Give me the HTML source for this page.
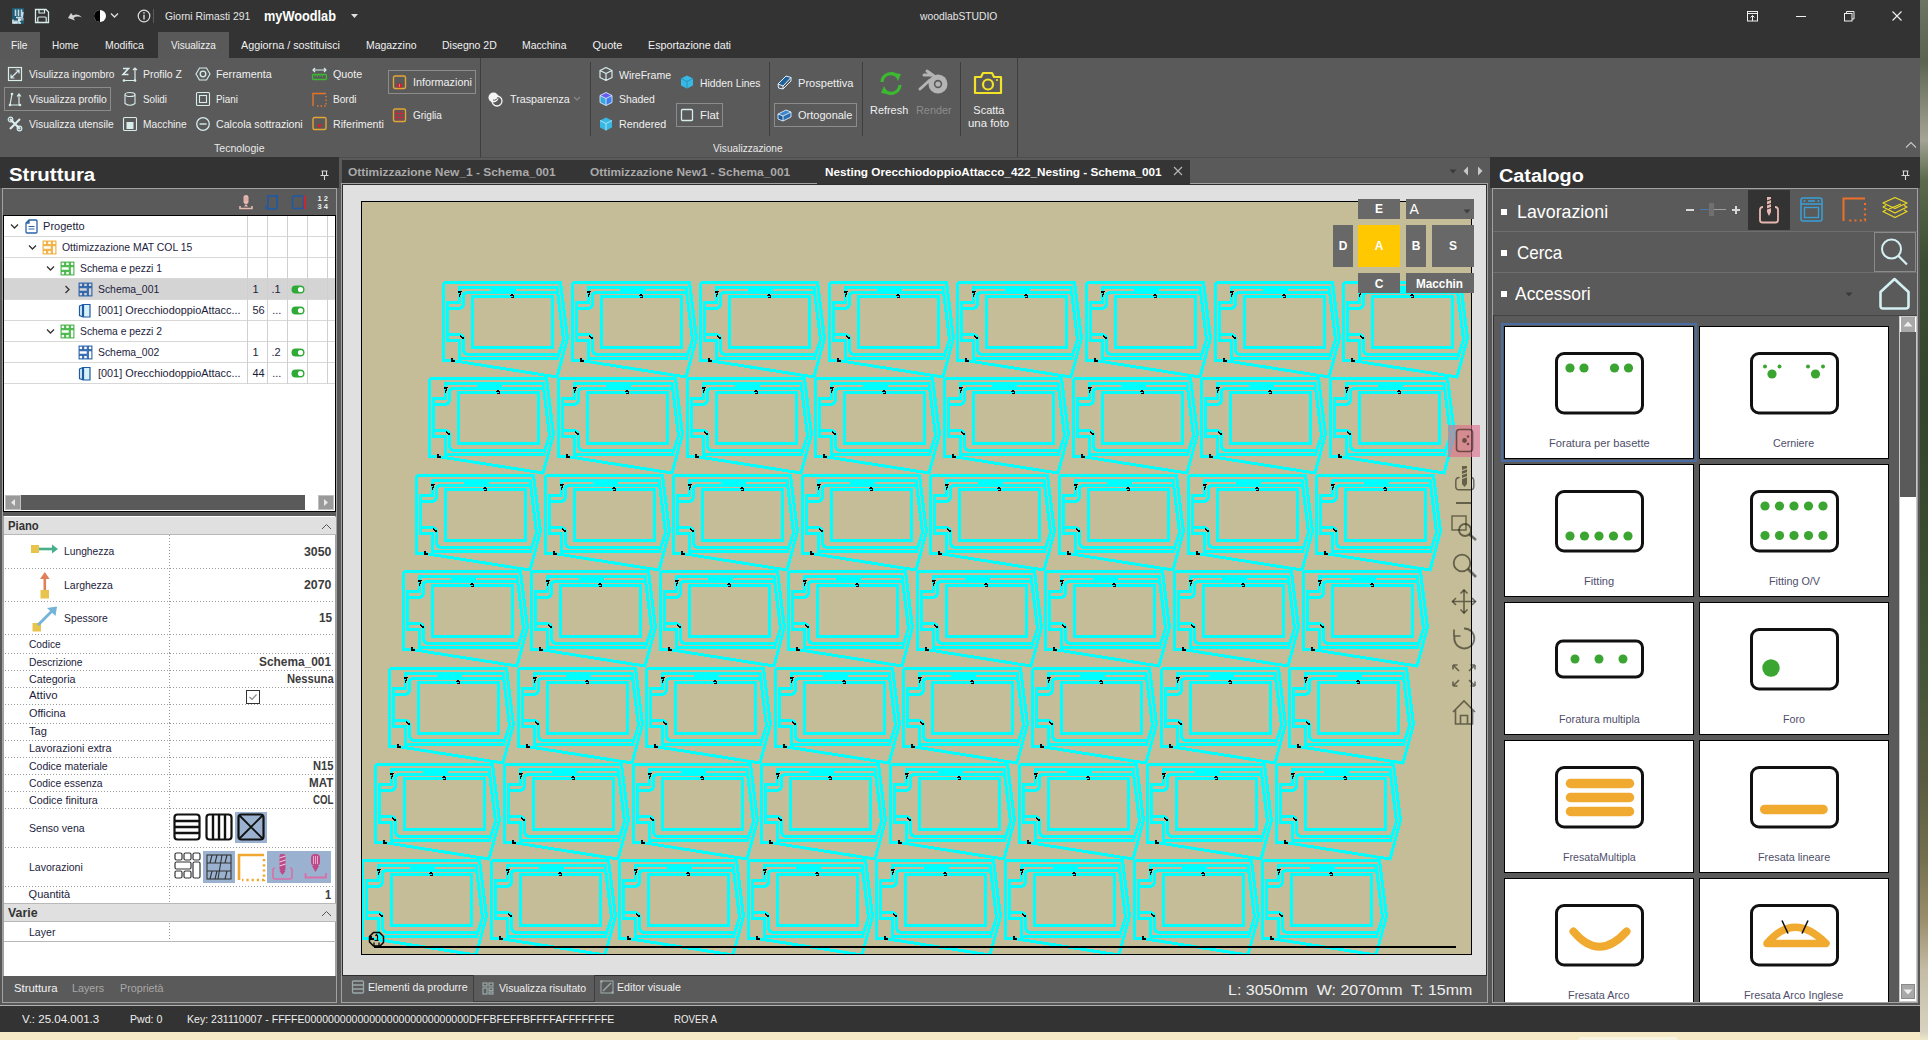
<!DOCTYPE html>
<html><head><meta charset="utf-8">
<style>
*{box-sizing:border-box}
html,body{margin:0;padding:0}
body{width:1928px;height:1040px;position:relative;overflow:hidden;background:#f6ebc6;font-family:"Liberation Sans",sans-serif;font-size:11px;color:#fff}
.a{position:absolute}
.t{position:absolute;white-space:nowrap;line-height:1;transform-origin:0 0}
svg.a{overflow:visible}
</style></head><body>
<div class="a" style="left:1920px;top:0;width:8px;height:1040px;background:linear-gradient(#6c7464 0px,#5a6450 60px,#8a8c7c 110px,#a4a494 140px,#5a6a4a 180px,#3e4e34 260px,#34442c 400px,#3c4c30 560px,#465638 680px,#5a5c40 780px,#74704e 860px,#9a8e6c 920px,#c4bca4 970px,#d8d2c0 1032px,#efe6c8 1040px)"></div>
<div id="app" class="a" style="left:0;top:0;width:1920px;height:1032px;background:#4e4e4e;overflow:hidden">
<div class="a" style="left:0;top:0;width:1920px;height:58px;background:#333333"></div>
<svg class="a" style="left:12px;top:8px" width="12" height="16" viewBox="0 0 12 16">
<rect x="0" y="0" width="12" height="16" rx="1" fill="#1d5c74"/>
<path d="M3.5,1.5 V8 M6.5,1.5 V8 M9.5,1.5 V8 M4,9.5 H10 L11,4" stroke="#c8d8e0" stroke-width="1.6" fill="none"/>
<path d="M5,10 H11.5 V12.5 H8 Z" fill="#9aaab4"/>
<path d="M1,11.5 V15 H3 V12.5 M3,15 H5 V12.5 M7,10.5 V15 H9 M6,12 H9" stroke="#e8f0f2" stroke-width="1.5" fill="none"/>
</svg>
<svg class="a" style="left:34px;top:8px" width="16" height="16" viewBox="0 0 16 16">
<path d="M1.5,1.5 H12 L14.5,4 V14.5 H1.5 Z" fill="none" stroke="#d8ecec" stroke-width="1.3"/>
<path d="M5,1.5 V5 H10.5 V1.5" fill="none" stroke="#d8ecec" stroke-width="1.2"/>
<path d="M3.8,14.5 V10 Q3.8,9 4.8,9 H11.2 Q12.2,9 12.2,10 V14.5" fill="none" stroke="#d8ecec" stroke-width="1.2"/>
</svg>
<svg class="a" style="left:67px;top:10px" width="16" height="12" viewBox="0 0 16 12">
<path d="M1,8 L4,3 L6,5.5 Q11,3 15,7.5 Q10,5.5 6.5,8 L8,10.5 Z" fill="#d4d4d4"/>
</svg>
<svg class="a" style="left:93px;top:9px" width="14" height="14" viewBox="0 0 14 14">
<circle cx="7" cy="7" r="6" fill="#fff"/><path d="M7,1 A6,6 0 0 0 7,13 Z" fill="#000"/></svg>
<svg class="a" style="left:110px;top:12px" width="9" height="7" viewBox="0 0 9 7"><path d="M1,1.5 L4.5,5 L8,1.5" stroke="#e0e0e0" stroke-width="1.3" fill="none"/></svg>
<svg class="a" style="left:137px;top:9px" width="14" height="14" viewBox="0 0 14 14"><circle cx="7" cy="7" r="5.8" stroke="#e0e0e0" stroke-width="1.2" fill="none"/><path d="M7,5.8 V10.5" stroke="#e0e0e0" stroke-width="1.4"/><circle cx="7" cy="3.9" r="0.8" fill="#e0e0e0"/></svg>
<div class="a" style="left:153px;top:9px;width:1px;height:14px;background:#5a5a5a"></div>
<span class="t" style="left:165.30px;top:11.29px;font-size:11px;font-weight:400;color:#e6e6e6;transform:scaleX(0.9428);">Giorni Rimasti 291</span>
<span class="t" style="left:264.00px;top:8.75px;font-size:14px;font-weight:700;color:#ffffff;transform:scaleX(0.9105);">myWoodlab</span>
<svg class="a" style="left:351px;top:14px" width="7" height="4" viewBox="0 0 7 4"><path d="M0,0 H7 L3.5,4 Z" fill="#e0e0e0"/></svg>
<span class="t" style="left:919.80px;top:10.69px;font-size:11px;font-weight:400;color:#e6e6e6;transform:scaleX(0.9378);">woodlabSTUDIO</span>
<svg class="a" style="left:1746px;top:10px" width="13" height="12" viewBox="0 0 13 12" fill="none" stroke="#f0f0f0" stroke-width="1">
<rect x="1.5" y="1.5" width="10" height="9.5"/><path d="M1.5,3.5 H11.5"/><path d="M6.5,11 V5.5 M4.5,7.5 L6.5,5.5 L8.5,7.5"/></svg>
<div class="a" style="left:1796px;top:16px;width:10px;height:1px;background:#f0f0f0"></div>
<svg class="a" style="left:1843px;top:10px" width="12" height="12" viewBox="0 0 12 12" fill="none" stroke="#f0f0f0" stroke-width="1">
<rect x="1.5" y="3.5" width="7.5" height="7.5"/><path d="M3.5,3.5 V1.5 H11 V9 H9"/></svg>
<svg class="a" style="left:1891px;top:10px" width="12" height="12" viewBox="0 0 12 12"><path d="M1.5,1.5 L10.5,10.5 M10.5,1.5 L1.5,10.5" stroke="#f0f0f0" stroke-width="1.1"/></svg>
<div class="a" style="left:0;top:32px;width:40px;height:26px;background:#595959"></div>
<div class="a" style="left:158px;top:32px;width:71px;height:26px;background:#595959"></div>
<span class="t" style="left:11.40px;top:40.19px;font-size:11px;font-weight:400;color:#f0f0f0;transform:scaleX(0.9309);">File</span>
<span class="t" style="left:52.20px;top:40.19px;font-size:11px;font-weight:400;color:#f0f0f0;transform:scaleX(0.9065);">Home</span>
<span class="t" style="left:105.40px;top:40.19px;font-size:11px;font-weight:400;color:#f0f0f0;transform:scaleX(0.9497);">Modifica</span>
<span class="t" style="left:170.50px;top:40.19px;font-size:11px;font-weight:400;color:#f0f0f0;transform:scaleX(0.9103);">Visualizza</span>
<span class="t" style="left:241.40px;top:40.19px;font-size:11px;font-weight:400;color:#f0f0f0;transform:scaleX(0.9814);">Aggiorna / sostituisci</span>
<span class="t" style="left:366.10px;top:40.19px;font-size:11px;font-weight:400;color:#f0f0f0;transform:scaleX(0.9493);">Magazzino</span>
<span class="t" style="left:442.20px;top:40.19px;font-size:11px;font-weight:400;color:#f0f0f0;transform:scaleX(0.9517);">Disegno 2D</span>
<span class="t" style="left:522.20px;top:40.19px;font-size:11px;font-weight:400;color:#f0f0f0;transform:scaleX(0.9431);">Macchina</span>
<span class="t" style="left:592.50px;top:40.19px;font-size:11px;font-weight:400;color:#f0f0f0;">Quote</span>
<span class="t" style="left:648.30px;top:40.19px;font-size:11px;font-weight:400;color:#f0f0f0;transform:scaleX(0.9765);">Esportazione dati</span>
<div class="a" style="left:0;top:58px;width:1920px;height:99px;background:#5a5a5a"></div>
<div class="a" style="left:480px;top:58px;width:1px;height:99px;background:#3e3e3e"></div>
<div class="a" style="left:1017px;top:58px;width:1px;height:99px;background:#3e3e3e"></div>
<div class="a" style="left:590px;top:62px;width:1px;height:74px;background:#3e3e3e"></div>
<div class="a" style="left:769px;top:62px;width:1px;height:74px;background:#3e3e3e"></div>
<div class="a" style="left:862px;top:62px;width:1px;height:74px;background:#3e3e3e"></div>
<div class="a" style="left:960px;top:62px;width:1px;height:74px;background:#3e3e3e"></div>
<svg class="a" style="left:7px;top:66px" width="16" height="16" viewBox="0 0 16 16"><rect x="1.5" y="1.5" width="13" height="13" fill="none" stroke="#d8ecec" stroke-width="1.2"/><path d="M4,12 L12,4 M8.5,4 H12 V7.5 M4,8.5 V12 H7.5" fill="none" stroke="#d8ecec" stroke-width="1.2"/></svg>
<span class="t" style="left:28.60px;top:68.89px;font-size:11px;font-weight:400;color:#f0f0f0;transform:scaleX(0.9281);">Visulizza ingombro</span>
<div class="a" style="left:4px;top:87px;width:107px;height:24px;border:1px solid #8c8c8c"></div>
<svg class="a" style="left:7px;top:91px" width="16" height="16" viewBox="0 0 16 16"><path d="M3,14 L5,3 M3,14 H13 M12,14 V3 M10,5.5 L12,3 L14,5.5" fill="none" stroke="#d8ecec" stroke-width="1.2"/><circle cx="3" cy="14" r="1.3" fill="#d8ecec"/><circle cx="13" cy="14" r="1.3" fill="#d8ecec"/><circle cx="5" cy="3" r="1.3" fill="#d8ecec"/></svg>
<span class="t" style="left:28.60px;top:94.09px;font-size:11px;font-weight:400;color:#f0f0f0;transform:scaleX(0.9449);">Visualizza profilo</span>
<svg class="a" style="left:7px;top:116px" width="16" height="16" viewBox="0 0 16 16"><path d="M3,3 L13,13 M13,3 L3,13" stroke="#d8ecec" stroke-width="2.2"/><circle cx="3.5" cy="3.5" r="2.3" fill="none" stroke="#d8ecec" stroke-width="1.2"/><circle cx="12.5" cy="12.5" r="2.3" fill="none" stroke="#d8ecec" stroke-width="1.2"/></svg>
<span class="t" style="left:28.60px;top:119.09px;font-size:11px;font-weight:400;color:#f0f0f0;transform:scaleX(0.9381);">Visualizza utensile</span>
<svg class="a" style="left:122px;top:66px" width="16" height="16" viewBox="0 0 16 16"><path d="M1,2.5 H6.5 L1,8.5 H6.5" fill="none" stroke="#d8ecec" stroke-width="1.6"/><path d="M2,14.5 H13 M13,14.5 V2 M11,4 L13,2 L15,4" fill="none" stroke="#d8ecec" stroke-width="1.2"/><circle cx="2" cy="14.5" r="1.3" fill="#d8ecec"/><circle cx="13" cy="14.5" r="1.3" fill="#d8ecec"/></svg>
<span class="t" style="left:143.40px;top:68.89px;font-size:11px;font-weight:400;color:#f0f0f0;transform:scaleX(0.9523);">Profilo Z</span>
<svg class="a" style="left:122px;top:91px" width="16" height="16" viewBox="0 0 16 16"><ellipse cx="8" cy="3.5" rx="5" ry="2" fill="none" stroke="#d8ecec" stroke-width="1.1"/><path d="M3,3.5 V12.5 Q8,16 13,12.5 V3.5" fill="none" stroke="#d8ecec" stroke-width="1.1"/></svg>
<span class="t" style="left:143.40px;top:94.09px;font-size:11px;font-weight:400;color:#f0f0f0;transform:scaleX(0.8921);">Solidi</span>
<svg class="a" style="left:122px;top:116px" width="16" height="16" viewBox="0 0 16 16"><rect x="1.5" y="1.5" width="13" height="13" rx="1" fill="none" stroke="#d8ecec" stroke-width="1.1"/><rect x="4.5" y="6" width="7" height="7" fill="#d8ecec"/></svg>
<span class="t" style="left:143.40px;top:119.09px;font-size:11px;font-weight:400;color:#f0f0f0;transform:scaleX(0.9283);">Macchine</span>
<svg class="a" style="left:195px;top:66px" width="16" height="16" viewBox="0 0 16 16"><path d="M4.5,2 H11.5 L15,8 L11.5,14 H4.5 L1,8 Z" fill="none" stroke="#d8ecec" stroke-width="1.1"/><circle cx="8" cy="8" r="2.8" fill="none" stroke="#d8ecec" stroke-width="1.3"/></svg>
<span class="t" style="left:216.40px;top:68.89px;font-size:11px;font-weight:400;color:#f0f0f0;transform:scaleX(0.9815);">Ferramenta</span>
<svg class="a" style="left:195px;top:91px" width="16" height="16" viewBox="0 0 16 16"><rect x="1.5" y="1.5" width="13" height="13" rx="1" fill="none" stroke="#d8ecec" stroke-width="1.1"/><rect x="4.5" y="4.5" width="7" height="7" fill="none" stroke="#d8ecec" stroke-width="1.1"/></svg>
<span class="t" style="left:216.40px;top:94.09px;font-size:11px;font-weight:400;color:#f0f0f0;transform:scaleX(0.8953);">Piani</span>
<svg class="a" style="left:195px;top:116px" width="16" height="16" viewBox="0 0 16 16"><circle cx="8" cy="8" r="6.3" fill="none" stroke="#d8ecec" stroke-width="1.3"/><path d="M4.5,8 H11.5" stroke="#d8ecec" stroke-width="1.4"/></svg>
<span class="t" style="left:216.40px;top:119.09px;font-size:11px;font-weight:400;color:#f0f0f0;transform:scaleX(0.9647);">Calcola sottrazioni</span>
<svg class="a" style="left:311px;top:66px" width="17" height="16" viewBox="0 0 17 16"><path d="M2,4 H15 M4,2 L2,4 L4,6 M13,2 L15,4 L13,6" fill="none" stroke="#d8ecec" stroke-width="1.2"/><rect x="1.5" y="8.5" width="14" height="5" rx="1" fill="none" stroke="#3cb832" stroke-width="1.3"/><path d="M4,9 V11 M6.5,9 V11 M9,9 V11 M11.5,9 V11" stroke="#3cb832" stroke-width="0.8"/></svg>
<span class="t" style="left:332.60px;top:68.89px;font-size:11px;font-weight:400;color:#f0f0f0;transform:scaleX(0.9745);">Quote</span>
<svg class="a" style="left:311px;top:92px" width="17" height="15" viewBox="0 0 17 15"><path d="M2,14 V1.5 H15" fill="none" stroke="#e8742a" stroke-width="1.4"/><path d="M15,4 V14 H4" fill="none" stroke="#e8742a" stroke-width="1.4" stroke-dasharray="1.5,2"/></svg>
<span class="t" style="left:332.60px;top:94.09px;font-size:11px;font-weight:400;color:#f0f0f0;transform:scaleX(0.9190);">Bordi</span>
<svg class="a" style="left:311px;top:116px" width="17" height="15" viewBox="0 0 17 15"><rect x="2" y="1.5" width="13" height="12" rx="1.5" fill="none" stroke="#e4a634" stroke-width="1.4"/><path d="M5.5,8.5 H11.5 L8.5,12 Z" fill="#d81e2a"/></svg>
<span class="t" style="left:332.60px;top:119.09px;font-size:11px;font-weight:400;color:#f0f0f0;transform:scaleX(0.9664);">Riferimenti</span>
<div class="a" style="left:388px;top:70px;width:88px;height:24px;border:1px solid #8c8c8c"></div>
<svg class="a" style="left:392px;top:75px" width="16" height="15" viewBox="0 0 16 15"><rect x="1.5" y="1" width="12" height="12.5" rx="1.5" fill="none" stroke="#e4a634" stroke-width="1.4"/><rect x="5" y="8.5" width="5" height="4" rx="1.2" fill="#d81e2a"/><path d="M7.5,9 V12" stroke="#f0a0a0" stroke-width="0.7"/></svg>
<span class="t" style="left:412.60px;top:76.99px;font-size:11px;font-weight:400;color:#f0f0f0;transform:scaleX(0.9814);">Informazioni</span>
<svg class="a" style="left:392px;top:108px" width="16" height="15" viewBox="0 0 16 15"><rect x="1.5" y="1" width="12" height="12.5" rx="1.5" fill="none" stroke="#e4a634" stroke-width="1.4"/><path d="M5.5,2.5 V12.5 M9.5,2.5 V12.5 M2.5,5.5 H12.5 M2.5,9.5 H12.5" stroke="#c62a3a" stroke-width="1.2"/></svg>
<span class="t" style="left:412.60px;top:110.29px;font-size:11px;font-weight:400;color:#f0f0f0;transform:scaleX(0.9092);">Griglia</span>
<span class="t" style="left:214.25px;top:143.49px;font-size:11px;font-weight:400;color:#e8e8e8;transform:scaleX(0.9602);">Tecnologie</span>
<svg class="a" style="left:487px;top:91px" width="17" height="16" viewBox="0 0 17 16"><circle cx="6.5" cy="6.5" r="5" fill="#f4f4f4"/><circle cx="10" cy="10" r="5" fill="none" stroke="#f4f4f4" stroke-width="1.3"/><path d="M6,9 A4,4 0 0 0 11,6" stroke="#5a5a5a" stroke-width="1" fill="none"/></svg>
<span class="t" style="left:509.90px;top:94.29px;font-size:11px;font-weight:400;color:#f0f0f0;transform:scaleX(0.9732);">Trasparenza</span>
<svg class="a" style="left:573px;top:96px" width="8" height="6" viewBox="0 0 8 6"><path d="M1,1 L4,4 L7,1" stroke="#8a8a8a" stroke-width="1.1" fill="none"/></svg>
<svg class="a" style="left:598px;top:66px" width="16" height="16" viewBox="0 0 16 16"><path d="M8,1.5 L14,4.5 V11.5 L8,14.5 L2,11.5 V4.5 Z M2,4.5 L8,7.5 L14,4.5 M8,7.5 V14.5" fill="none" stroke="#d8ecec" stroke-width="1.2" stroke-linejoin="round"/></svg>
<span class="t" style="left:619.40px;top:69.69px;font-size:11px;font-weight:400;color:#f0f0f0;transform:scaleX(0.9579);">WireFrame</span>
<svg class="a" style="left:598px;top:91px" width="16" height="16" viewBox="0 0 16 16"><path d="M8,1.5 L14,4.5 V11.5 L8,14.5 L2,11.5 V4.5 Z" fill="#3aa6e0"/><path d="M2,4.5 L8,1.5 L14,4.5 L8,7.5 Z" fill="#6a5cf2"/><path d="M8,7.5 L14,4.5 V11.5 L8,14.5 Z" fill="#3f7ef0"/><path d="M8,1.5 L14,4.5 V11.5 L8,14.5 L2,11.5 V4.5 Z M2,4.5 L8,7.5 L14,4.5 M8,7.5 V14.5" fill="none" stroke="#e8f4ff" stroke-width="0.8"/></svg>
<span class="t" style="left:619.40px;top:94.29px;font-size:11px;font-weight:400;color:#f0f0f0;transform:scaleX(0.9466);">Shaded</span>
<svg class="a" style="left:598px;top:116px" width="16" height="16" viewBox="0 0 16 16"><path d="M8,1.5 L14,4.5 V11.5 L8,14.5 L2,11.5 V4.5 Z" fill="#38b8e4"/><path d="M2,4.5 L8,7.5 L14,4.5 M8,7.5 V14.5" fill="none" stroke="#c8ecf8" stroke-width="0.8"/></svg>
<span class="t" style="left:619.40px;top:119.19px;font-size:11px;font-weight:400;color:#f0f0f0;transform:scaleX(0.9770);">Rendered</span>
<svg class="a" style="left:679px;top:74px" width="16" height="16" viewBox="0 0 16 16"><path d="M8,1.5 L14,4.5 V11.5 L8,14.5 L2,11.5 V4.5 Z" fill="#38b8e4"/><path d="M2,4.5 L8,7.5 L14,4.5 M8,7.5 V14.5" fill="none" stroke="#1e8ab8" stroke-width="0.8"/></svg>
<span class="t" style="left:700.10px;top:77.69px;font-size:11px;font-weight:400;color:#f0f0f0;transform:scaleX(0.9406);">Hidden Lines</span>
<div class="a" style="left:676px;top:103px;width:47px;height:24px;border:1px solid #8c8c8c"></div>
<svg class="a" style="left:680px;top:108px" width="14" height="14" viewBox="0 0 14 14"><rect x="1.5" y="1.5" width="11" height="11" rx="1" fill="none" stroke="#d8ecec" stroke-width="1.3"/></svg>
<span class="t" style="left:700.10px;top:110.19px;font-size:11px;font-weight:400;color:#f0f0f0;transform:scaleX(1.0307);">Flat</span>
<svg class="a" style="left:776px;top:74px" width="17" height="16" viewBox="0 0 17 16"><path d="M2,10 L10,2 L15,3.5 L7,12 Z" fill="#1f5f9a"/><path d="M2,10 L10,2 L15,3.5 L7,12 Z M2,10 L2.5,14 L7,15 L15,7 V3.5 M7,12 V15" fill="none" stroke="#dff0ff" stroke-width="1"/></svg>
<span class="t" style="left:798.00px;top:77.69px;font-size:11px;font-weight:400;color:#f0f0f0;transform:scaleX(1.0068);">Prospettiva</span>
<div class="a" style="left:774px;top:103px;width:83px;height:24px;border:1px solid #8c8c8c"></div>
<svg class="a" style="left:776px;top:107px" width="17" height="16" viewBox="0 0 17 16"><path d="M2,7 L10,3 L15,5 L7,9 Z" fill="#3f86c8"/><path d="M2,7 L7,9 V14 L2,12 Z" fill="#1c5a96"/><path d="M7,9 L15,5 V10 L7,14 Z" fill="#2a6cb0"/><path d="M2,7 L10,3 L15,5 V10 L7,14 L2,12 Z M2,7 L7,9 L15,5 M7,9 V14" fill="none" stroke="#dff0ff" stroke-width="0.9"/></svg>
<span class="t" style="left:798.00px;top:110.19px;font-size:11px;font-weight:400;color:#f0f0f0;">Ortogonale</span>
<svg class="a" style="left:876px;top:70px" width="30" height="27" viewBox="0 0 30 27"><path d="M6,12 A9,9 0 0 1 22,7" fill="none" stroke="#3cb832" stroke-width="3.2"/><path d="M18,3 L25,4 L22,11 Z" fill="#3cb832"/><path d="M24,15 A9,9 0 0 1 8,20" fill="none" stroke="#3cb832" stroke-width="3.2"/><path d="M12,24 L5,23 L8,16 Z" fill="#3cb832"/></svg>
<span class="t" style="left:869.90px;top:105.19px;font-size:11px;font-weight:400;color:#f0f0f0;transform:scaleX(0.9918);">Refresh</span>
<svg class="a" style="left:918px;top:69px" width="32" height="28" viewBox="0 0 32 28"><circle cx="20" cy="15" r="9.5" fill="#b4b4b4"/><circle cx="20" cy="15" r="4.2" fill="#5a5a5a"/><circle cx="20" cy="15" r="2.6" fill="#b4b4b4"/><path d="M2,20 L12,11 M6,6 H14 M9,2 L16,7" stroke="#b4b4b4" stroke-width="3" stroke-linecap="round"/></svg>
<span class="t" style="left:915.80px;top:105.19px;font-size:11px;font-weight:400;color:#8c8c8c;transform:scaleX(0.9868);">Render</span>
<svg class="a" style="left:972px;top:70px" width="32" height="26" viewBox="0 0 32 26"><path d="M3,7 H9 L11,3 H20 L22,7 H29 V23 H3 Z" fill="none" stroke="#f2e22a" stroke-width="2.2" stroke-linejoin="round"/><circle cx="16" cy="14.5" r="5" fill="none" stroke="#f2e22a" stroke-width="2.2"/><circle cx="25" cy="10" r="1.1" fill="#f2e22a"/></svg>
<span class="t" style="left:973.30px;top:105.19px;font-size:11px;font-weight:400;color:#f0f0f0;">Scatta</span>
<span class="t" style="left:968.30px;top:118.49px;font-size:11px;font-weight:400;color:#f0f0f0;transform:scaleX(1.0363);">una foto</span>
<span class="t" style="left:713.40px;top:143.49px;font-size:11px;font-weight:400;color:#e8e8e8;transform:scaleX(0.9204);">Visualizzazione</span>
<svg class="a" style="left:1905px;top:141px" width="12" height="8" viewBox="0 0 12 8"><path d="M1,6.5 L6,1.5 L11,6.5" stroke="#c8c8c8" stroke-width="1.1" fill="none"/></svg>
<div class="a" style="left:0;top:157px;width:339px;height:31px;background:#333"></div>
<span class="t" style="left:9.20px;top:166.36px;font-size:18px;font-weight:700;color:#ffffff;transform:scaleX(1.1342);">Struttura</span>
<svg class="a" style="left:319px;top:170px;" width="11" height="11" viewBox="0 0 11 11"><path d="M2.5,1 H8.5 M3.5,1 V5.5 M7.5,1 V5.5 M1.5,5.5 H9.5 M5.5,5.5 V10" stroke="#d8d8d8" stroke-width="1.1" fill="none"/></svg>
<div class="a" style="left:0;top:188px;width:339px;height:817px;background:#575757"></div>
<div class="a" style="left:2px;top:188px;width:335px;height:815px;background:#5a5a5a;border:1px solid #a2a2a2"></div>
<svg class="a" style="left:239px;top:194px;" width="14" height="16" viewBox="0 0 14 16"><rect x="4.5" y="1" width="5" height="9" rx="2.5" fill="#e7b9b2"/><path d="M7,10 L5,12.5 H9 Z" fill="#e7b9b2"/><path d="M1,12 V14.5 H13 V12" stroke="#e7b9b2" stroke-width="1.6" fill="none"/><path d="M6,3 V7 M8,3 V7" stroke="#c89890" stroke-width="0.6"/></svg>
<svg class="a" style="left:265px;top:194px;" width="14" height="16" viewBox="0 0 14 16"><path d="M3,2 H12 V13 Q12,15 10,15 H2 Q1,15 1,13 H3 Z M3,2 V13" fill="none" stroke="#1d5aa6" stroke-width="1.6"/><circle cx="12" cy="2.5" r="1.4" fill="#1d5aa6"/></svg>
<svg class="a" style="left:291px;top:194px;" width="16" height="16" viewBox="0 0 16 16"><rect x="1.5" y="2" width="11" height="12.5" rx="1.5" fill="none" stroke="#1d5aa6" stroke-width="1.6"/><rect x="12.8" y="1.5" width="1.8" height="13.5" fill="#e01e24"/></svg>
<svg class="a" style="left:317px;top:194px;" width="14" height="16" viewBox="0 0 14 16"><text x="0.5" y="7.2" font-size="7.5" font-weight="700" fill="#e8f2f2" font-family="Liberation Sans">1 2</text><text x="0.5" y="14.8" font-size="7.5" font-weight="700" fill="#e8f2f2" font-family="Liberation Sans">3 4</text></svg>
<div class="a" style="left:3px;top:215px;width:333px;height:297px;background:#fff;border:1px solid #000"></div>
<div class="a" style="left:4px;top:279px;width:331px;height:21px;background:#d4d4d4"></div>
<div class="a" style="left:4px;top:236px;width:331px;height:1px;background:#d8d8d8"></div>
<div class="a" style="left:4px;top:257px;width:331px;height:1px;background:#d8d8d8"></div>
<div class="a" style="left:4px;top:278px;width:331px;height:1px;background:#d8d8d8"></div>
<div class="a" style="left:4px;top:299px;width:331px;height:1px;background:#d8d8d8"></div>
<div class="a" style="left:4px;top:320px;width:331px;height:1px;background:#d8d8d8"></div>
<div class="a" style="left:4px;top:341px;width:331px;height:1px;background:#d8d8d8"></div>
<div class="a" style="left:4px;top:362px;width:331px;height:1px;background:#d8d8d8"></div>
<div class="a" style="left:4px;top:383px;width:331px;height:1px;background:#d8d8d8"></div>
<div class="a" style="left:247px;top:216px;width:1px;height:168px;background:#d0d0d0"></div>
<div class="a" style="left:267px;top:216px;width:1px;height:168px;background:#d0d0d0"></div>
<div class="a" style="left:287px;top:216px;width:1px;height:168px;background:#d0d0d0"></div>
<div class="a" style="left:307px;top:216px;width:1px;height:168px;background:#d0d0d0"></div>
<div class="a" style="left:327px;top:216px;width:1px;height:168px;background:#d0d0d0"></div>
<svg class="a" style="left:9.5px;top:223px;" width="9" height="7" viewBox="0 0 9 7"><path d="M1,1.5 L4.5,5 L8,1.5" stroke="#333" stroke-width="1.3" fill="none"/></svg>
<svg class="a" style="left:24.5px;top:219px;" width="14" height="15" viewBox="0 0 14 15"><path d="M4,1 H11 Q12,1 12,2 V13 Q12,14 11,14 H2 Q1,14 1,13 V4 Z M4,1 V4 H1" fill="#ffffff" stroke="#2a63a8" stroke-width="1.3"/><path d="M3.5,7.5 H9.5 M3.5,10 H9.5" stroke="#2a63a8" stroke-width="1.2"/></svg>
<span class="t" style="left:43.10px;top:221.19px;font-size:11px;font-weight:400;color:#1c1c3c;">Progetto</span>
<svg class="a" style="left:27.5px;top:244px;" width="9" height="7" viewBox="0 0 9 7"><path d="M1,1.5 L4.5,5 L8,1.5" stroke="#333" stroke-width="1.3" fill="none"/></svg>
<svg class="a" style="left:41.5px;top:240px;" width="14" height="15" viewBox="0 0 14 15"><g fill="none" stroke="#f0a830" stroke-width="1.05"><rect x="1.1" y="1.1" width="3.6" height="3.6"/><rect x="5.7" y="1.1" width="3.6" height="3.6"/><rect x="10.3" y="1.1" width="3.6" height="3.6"/><rect x="1.1" y="5.7" width="8.2" height="3.6"/><rect x="10.3" y="5.7" width="3.6" height="8.2"/><rect x="1.1" y="10.3" width="3.6" height="3.6"/><rect x="5.7" y="10.3" width="3.6" height="3.6"/></g></svg>
<span class="t" style="left:61.70px;top:242.19px;font-size:11px;font-weight:400;color:#1c1c3c;transform:scaleX(0.9440);">Ottimizzazione MAT COL 15</span>
<svg class="a" style="left:45.5px;top:265px;" width="9" height="7" viewBox="0 0 9 7"><path d="M1,1.5 L4.5,5 L8,1.5" stroke="#333" stroke-width="1.3" fill="none"/></svg>
<svg class="a" style="left:60px;top:261px;" width="14" height="15" viewBox="0 0 14 15"><g fill="none" stroke="#38b038" stroke-width="1.05"><rect x="1.1" y="1.1" width="3.6" height="3.6"/><rect x="5.7" y="1.1" width="3.6" height="3.6"/><rect x="10.3" y="1.1" width="3.6" height="3.6"/><rect x="1.1" y="5.7" width="8.2" height="3.6"/><rect x="10.3" y="5.7" width="3.6" height="8.2"/><rect x="1.1" y="10.3" width="3.6" height="3.6"/><rect x="5.7" y="10.3" width="3.6" height="3.6"/></g></svg>
<span class="t" style="left:79.60px;top:263.19px;font-size:11px;font-weight:400;color:#1c1c3c;transform:scaleX(0.9378);">Schema e pezzi 1</span>
<svg class="a" style="left:64px;top:285px;" width="7" height="9" viewBox="0 0 7 9"><path d="M1.5,1 L5,4.5 L1.5,8" stroke="#333" stroke-width="1.3" fill="none"/></svg>
<svg class="a" style="left:77.5px;top:282px;" width="14" height="15" viewBox="0 0 14 15"><g fill="none" stroke="#1d5aa6" stroke-width="1.05"><rect x="1.1" y="1.1" width="3.6" height="3.6"/><rect x="5.7" y="1.1" width="3.6" height="3.6"/><rect x="10.3" y="1.1" width="3.6" height="3.6"/><rect x="1.1" y="5.7" width="8.2" height="3.6"/><rect x="10.3" y="5.7" width="3.6" height="8.2"/><rect x="1.1" y="10.3" width="3.6" height="3.6"/><rect x="5.7" y="10.3" width="3.6" height="3.6"/></g></svg>
<span class="t" style="left:97.80px;top:284.19px;font-size:11px;font-weight:400;color:#1c1c3c;transform:scaleX(0.9441);">Schema_001</span>
<svg class="a" style="left:78px;top:303px;" width="14" height="15" viewBox="0 0 14 15"><path d="M1.5,3 L5,1.5 H12 V14 H5 L1.5,12.5 Z" fill="#d8f0f8" stroke="#1d5aa6" stroke-width="1.2"/><path d="M5,1.5 V14" stroke="#1d5aa6" stroke-width="2.2"/></svg>
<span class="t" style="left:97.80px;top:305.19px;font-size:11px;font-weight:400;color:#1c1c3c;transform:scaleX(0.9875);">[001] OrecchiodoppioAttacc...</span>
<svg class="a" style="left:45.5px;top:328px;" width="9" height="7" viewBox="0 0 9 7"><path d="M1,1.5 L4.5,5 L8,1.5" stroke="#333" stroke-width="1.3" fill="none"/></svg>
<svg class="a" style="left:60px;top:324px;" width="14" height="15" viewBox="0 0 14 15"><g fill="none" stroke="#38b038" stroke-width="1.05"><rect x="1.1" y="1.1" width="3.6" height="3.6"/><rect x="5.7" y="1.1" width="3.6" height="3.6"/><rect x="10.3" y="1.1" width="3.6" height="3.6"/><rect x="1.1" y="5.7" width="8.2" height="3.6"/><rect x="10.3" y="5.7" width="3.6" height="8.2"/><rect x="1.1" y="10.3" width="3.6" height="3.6"/><rect x="5.7" y="10.3" width="3.6" height="3.6"/></g></svg>
<span class="t" style="left:79.60px;top:326.19px;font-size:11px;font-weight:400;color:#1c1c3c;transform:scaleX(0.9378);">Schema e pezzi 2</span>
<svg class="a" style="left:77.5px;top:345px;" width="14" height="15" viewBox="0 0 14 15"><g fill="none" stroke="#1d5aa6" stroke-width="1.05"><rect x="1.1" y="1.1" width="3.6" height="3.6"/><rect x="5.7" y="1.1" width="3.6" height="3.6"/><rect x="10.3" y="1.1" width="3.6" height="3.6"/><rect x="1.1" y="5.7" width="8.2" height="3.6"/><rect x="10.3" y="5.7" width="3.6" height="8.2"/><rect x="1.1" y="10.3" width="3.6" height="3.6"/><rect x="5.7" y="10.3" width="3.6" height="3.6"/></g></svg>
<span class="t" style="left:97.80px;top:347.19px;font-size:11px;font-weight:400;color:#1c1c3c;transform:scaleX(0.9441);">Schema_002</span>
<svg class="a" style="left:78px;top:366px;" width="14" height="15" viewBox="0 0 14 15"><path d="M1.5,3 L5,1.5 H12 V14 H5 L1.5,12.5 Z" fill="#d8f0f8" stroke="#1d5aa6" stroke-width="1.2"/><path d="M5,1.5 V14" stroke="#1d5aa6" stroke-width="2.2"/></svg>
<span class="t" style="left:97.80px;top:368.19px;font-size:11px;font-weight:400;color:#1c1c3c;transform:scaleX(0.9875);">[001] OrecchiodoppioAttacc...</span>
<span class="t" style="left:252.50px;top:284.19px;font-size:11px;font-weight:400;color:#1c1c3c;">1</span>
<span class="t" style="left:271.50px;top:284.19px;font-size:11px;font-weight:400;color:#1c1c3c;">.1</span>
<svg class="a" style="left:291px;top:285px;" width="14" height="9" viewBox="0 0 14 9"><rect x="0.5" y="0.5" width="13" height="8" rx="4" fill="#2eaa36"/><circle cx="9.5" cy="4.5" r="2.6" fill="#fff"/></svg>
<span class="t" style="left:252.50px;top:305.19px;font-size:11px;font-weight:400;color:#1c1c3c;">56</span>
<span class="t" style="left:272.20px;top:305.19px;font-size:11px;font-weight:400;color:#1c1c3c;">...</span>
<svg class="a" style="left:291px;top:306px;" width="14" height="9" viewBox="0 0 14 9"><rect x="0.5" y="0.5" width="13" height="8" rx="4" fill="#2eaa36"/><circle cx="9.5" cy="4.5" r="2.6" fill="#fff"/></svg>
<span class="t" style="left:252.50px;top:347.19px;font-size:11px;font-weight:400;color:#1c1c3c;">1</span>
<span class="t" style="left:271.50px;top:347.19px;font-size:11px;font-weight:400;color:#1c1c3c;">.2</span>
<svg class="a" style="left:291px;top:348px;" width="14" height="9" viewBox="0 0 14 9"><rect x="0.5" y="0.5" width="13" height="8" rx="4" fill="#2eaa36"/><circle cx="9.5" cy="4.5" r="2.6" fill="#fff"/></svg>
<span class="t" style="left:252.50px;top:368.19px;font-size:11px;font-weight:400;color:#1c1c3c;">44</span>
<span class="t" style="left:272.20px;top:368.19px;font-size:11px;font-weight:400;color:#1c1c3c;">...</span>
<svg class="a" style="left:291px;top:369px;" width="14" height="9" viewBox="0 0 14 9"><rect x="0.5" y="0.5" width="13" height="8" rx="4" fill="#2eaa36"/><circle cx="9.5" cy="4.5" r="2.6" fill="#fff"/></svg>
<div class="a" style="left:4px;top:495px;width:331px;height:16px;background:#fff"></div>
<div class="a" style="left:5px;top:495px;width:16px;height:15px;background:#9a9a9a;border:1px solid #c0c0c0"></div>
<svg class="a" style="left:9px;top:498px;" width="8" height="9" viewBox="0 0 8 9"><path d="M6,1 L2,4.5 L6,8 Z" fill="#e8e8e8"/></svg>
<div class="a" style="left:21px;top:495px;width:284px;height:15px;background:#5a5a5a"></div>
<div class="a" style="left:318px;top:495px;width:16px;height:15px;background:#9a9a9a;border:1px solid #c0c0c0"></div>
<svg class="a" style="left:322px;top:498px;" width="8" height="9" viewBox="0 0 8 9"><path d="M2,1 L6,4.5 L2,8 Z" fill="#e8e8e8"/></svg>
<div class="a" style="left:3px;top:516px;width:333px;height:460px;background:#fff;border-left:1px solid #a0a0a0;border-right:1px solid #a0a0a0"></div>
<div class="a" style="left:4px;top:517px;width:332px;height:18px;background:#e0e0e0;border-bottom:1px solid #b8b8b8"></div>
<span class="t" style="left:8.00px;top:520.24px;font-size:12px;font-weight:700;color:#333;transform:scaleX(0.9396);">Piano</span>
<svg class="a" style="left:321px;top:523px;" width="11" height="7" viewBox="0 0 11 7"><path d="M1,6 L5.5,1.5 L10,6" stroke="#555" stroke-width="1" fill="none"/></svg>
<div class="a" style="left:5px;top:568px;width:331px;height:1px;background-image:linear-gradient(90deg,#9a9a9a 50%,transparent 50%);background-size:3px 1px"></div>
<div class="a" style="left:169px;top:535px;width:1px;height:33px;background-image:linear-gradient(#9a9a9a 50%,transparent 50%);background-size:1px 3px"></div>
<span class="t" style="left:63.50px;top:546.49px;font-size:11px;font-weight:400;color:#1c1c3c;transform:scaleX(0.9345);">Lunghezza</span>
<span class="t" style="left:304.20px;top:545.64px;font-size:12px;font-weight:700;color:#3c3c3c;transform:scaleX(1.0264);">3050</span>
<div class="a" style="left:5px;top:601px;width:331px;height:1px;background-image:linear-gradient(90deg,#9a9a9a 50%,transparent 50%);background-size:3px 1px"></div>
<div class="a" style="left:169px;top:568px;width:1px;height:33px;background-image:linear-gradient(#9a9a9a 50%,transparent 50%);background-size:1px 3px"></div>
<span class="t" style="left:63.50px;top:579.89px;font-size:11px;font-weight:400;color:#1c1c3c;transform:scaleX(0.9519);">Larghezza</span>
<span class="t" style="left:304.20px;top:579.04px;font-size:12px;font-weight:700;color:#3c3c3c;transform:scaleX(1.0264);">2070</span>
<div class="a" style="left:5px;top:634px;width:331px;height:1px;background-image:linear-gradient(90deg,#9a9a9a 50%,transparent 50%);background-size:3px 1px"></div>
<div class="a" style="left:169px;top:601px;width:1px;height:33px;background-image:linear-gradient(#9a9a9a 50%,transparent 50%);background-size:1px 3px"></div>
<span class="t" style="left:63.50px;top:612.69px;font-size:11px;font-weight:400;color:#1c1c3c;transform:scaleX(0.9425);">Spessore</span>
<span class="t" style="left:318.50px;top:611.84px;font-size:12px;font-weight:700;color:#3c3c3c;transform:scaleX(0.9814);">15</span>
<div class="a" style="left:5px;top:653px;width:331px;height:1px;background-image:linear-gradient(90deg,#9a9a9a 50%,transparent 50%);background-size:3px 1px"></div>
<div class="a" style="left:169px;top:634px;width:1px;height:19px;background-image:linear-gradient(#9a9a9a 50%,transparent 50%);background-size:1px 3px"></div>
<span class="t" style="left:28.60px;top:638.69px;font-size:11px;font-weight:400;color:#1c1c3c;transform:scaleX(0.9258);">Codice</span>
<div class="a" style="left:5px;top:670px;width:331px;height:1px;background-image:linear-gradient(90deg,#9a9a9a 50%,transparent 50%);background-size:3px 1px"></div>
<div class="a" style="left:169px;top:653px;width:1px;height:17px;background-image:linear-gradient(#9a9a9a 50%,transparent 50%);background-size:1px 3px"></div>
<span class="t" style="left:28.60px;top:656.69px;font-size:11px;font-weight:400;color:#1c1c3c;transform:scaleX(0.9310);">Descrizione</span>
<span class="t" style="left:259.30px;top:655.84px;font-size:12px;font-weight:700;color:#3c3c3c;transform:scaleX(0.9901);">Schema_001</span>
<div class="a" style="left:5px;top:687px;width:331px;height:1px;background-image:linear-gradient(90deg,#9a9a9a 50%,transparent 50%);background-size:3px 1px"></div>
<div class="a" style="left:169px;top:670px;width:1px;height:17px;background-image:linear-gradient(#9a9a9a 50%,transparent 50%);background-size:1px 3px"></div>
<span class="t" style="left:28.60px;top:673.59px;font-size:11px;font-weight:400;color:#1c1c3c;transform:scaleX(0.9749);">Categoria</span>
<span class="t" style="left:286.80px;top:672.74px;font-size:12px;font-weight:700;color:#3c3c3c;transform:scaleX(0.9316);">Nessuna</span>
<div class="a" style="left:5px;top:704px;width:331px;height:1px;background-image:linear-gradient(90deg,#9a9a9a 50%,transparent 50%);background-size:3px 1px"></div>
<div class="a" style="left:169px;top:687px;width:1px;height:17px;background-image:linear-gradient(#9a9a9a 50%,transparent 50%);background-size:1px 3px"></div>
<span class="t" style="left:28.60px;top:690.49px;font-size:11px;font-weight:400;color:#1c1c3c;transform:scaleX(1.0360);">Attivo</span>
<div class="a" style="left:5px;top:723px;width:331px;height:1px;background-image:linear-gradient(90deg,#9a9a9a 50%,transparent 50%);background-size:3px 1px"></div>
<div class="a" style="left:169px;top:704px;width:1px;height:19px;background-image:linear-gradient(#9a9a9a 50%,transparent 50%);background-size:1px 3px"></div>
<span class="t" style="left:28.60px;top:708.49px;font-size:11px;font-weight:400;color:#1c1c3c;transform:scaleX(0.9867);">Officina</span>
<div class="a" style="left:5px;top:740px;width:331px;height:1px;background-image:linear-gradient(90deg,#9a9a9a 50%,transparent 50%);background-size:3px 1px"></div>
<div class="a" style="left:169px;top:723px;width:1px;height:17px;background-image:linear-gradient(#9a9a9a 50%,transparent 50%);background-size:1px 3px"></div>
<span class="t" style="left:28.60px;top:726.49px;font-size:11px;font-weight:400;color:#1c1c3c;transform:scaleX(1.0093);">Tag</span>
<div class="a" style="left:5px;top:757px;width:331px;height:1px;background-image:linear-gradient(90deg,#9a9a9a 50%,transparent 50%);background-size:3px 1px"></div>
<div class="a" style="left:169px;top:740px;width:1px;height:17px;background-image:linear-gradient(#9a9a9a 50%,transparent 50%);background-size:1px 3px"></div>
<span class="t" style="left:28.60px;top:743.39px;font-size:11px;font-weight:400;color:#1c1c3c;transform:scaleX(0.9849);">Lavorazioni extra</span>
<div class="a" style="left:5px;top:774px;width:331px;height:1px;background-image:linear-gradient(90deg,#9a9a9a 50%,transparent 50%);background-size:3px 1px"></div>
<div class="a" style="left:169px;top:757px;width:1px;height:17px;background-image:linear-gradient(#9a9a9a 50%,transparent 50%);background-size:1px 3px"></div>
<span class="t" style="left:28.60px;top:760.69px;font-size:11px;font-weight:400;color:#1c1c3c;transform:scaleX(0.9535);">Codice materiale</span>
<span class="t" style="left:312.90px;top:759.84px;font-size:12px;font-weight:700;color:#3c3c3c;transform:scaleX(0.9312);">N15</span>
<div class="a" style="left:5px;top:791px;width:331px;height:1px;background-image:linear-gradient(90deg,#9a9a9a 50%,transparent 50%);background-size:3px 1px"></div>
<div class="a" style="left:169px;top:774px;width:1px;height:17px;background-image:linear-gradient(#9a9a9a 50%,transparent 50%);background-size:1px 3px"></div>
<span class="t" style="left:28.60px;top:777.69px;font-size:11px;font-weight:400;color:#1c1c3c;transform:scaleX(0.9404);">Codice essenza</span>
<span class="t" style="left:309.10px;top:776.84px;font-size:12px;font-weight:700;color:#3c3c3c;transform:scaleX(0.9681);">MAT</span>
<div class="a" style="left:5px;top:808px;width:331px;height:1px;background-image:linear-gradient(90deg,#9a9a9a 50%,transparent 50%);background-size:3px 1px"></div>
<div class="a" style="left:169px;top:791px;width:1px;height:17px;background-image:linear-gradient(#9a9a9a 50%,transparent 50%);background-size:1px 3px"></div>
<span class="t" style="left:28.60px;top:794.59px;font-size:11px;font-weight:400;color:#1c1c3c;transform:scaleX(0.9771);">Codice finitura</span>
<span class="t" style="left:312.90px;top:793.74px;font-size:12px;font-weight:700;color:#3c3c3c;transform:scaleX(0.8093);">COL</span>
<div class="a" style="left:5px;top:847px;width:331px;height:1px;background-image:linear-gradient(90deg,#9a9a9a 50%,transparent 50%);background-size:3px 1px"></div>
<div class="a" style="left:169px;top:808px;width:1px;height:39px;background-image:linear-gradient(#9a9a9a 50%,transparent 50%);background-size:1px 3px"></div>
<span class="t" style="left:28.60px;top:822.69px;font-size:11px;font-weight:400;color:#1c1c3c;transform:scaleX(0.9570);">Senso vena</span>
<div class="a" style="left:5px;top:886px;width:331px;height:1px;background-image:linear-gradient(90deg,#9a9a9a 50%,transparent 50%);background-size:3px 1px"></div>
<div class="a" style="left:169px;top:847px;width:1px;height:39px;background-image:linear-gradient(#9a9a9a 50%,transparent 50%);background-size:1px 3px"></div>
<span class="t" style="left:28.60px;top:862.09px;font-size:11px;font-weight:400;color:#1c1c3c;transform:scaleX(0.9563);">Lavorazioni</span>
<div class="a" style="left:169px;top:886px;width:1px;height:17px;background-image:linear-gradient(#9a9a9a 50%,transparent 50%);background-size:1px 3px"></div>
<span class="t" style="left:28.60px;top:889.39px;font-size:11px;font-weight:400;color:#1c1c3c;">Quantità</span>
<span class="t" style="left:325.40px;top:888.54px;font-size:12px;font-weight:700;color:#3c3c3c;transform:scaleX(0.9290);">1</span>
<div class="a" style="left:4px;top:903px;width:332px;height:1px;background:#b8b8b8"></div>
<svg class="a" style="left:30px;top:543px;" width="30" height="12" viewBox="0 0 30 12"><rect x="1" y="2" width="8" height="8" fill="#e9c44c"/><path d="M9,6 H24" stroke="#46b08a" stroke-width="2.6"/><path d="M22,1.5 L28,6 L22,10.5 Z" fill="#46b08a"/></svg>
<svg class="a" style="left:38px;top:571px;" width="14" height="28" viewBox="0 0 14 28"><rect x="2.5" y="19" width="8.5" height="8.5" fill="#e9c44c"/><path d="M6.8,19 V6" stroke="#e0805a" stroke-width="2.6"/><path d="M2,8 L6.8,1 L11.6,8 Z" fill="#e0805a"/></svg>
<svg class="a" style="left:31px;top:605px;" width="30" height="28" viewBox="0 0 30 28"><rect x="1.5" y="18" width="8.5" height="8.5" fill="#e9c44c"/><path d="M7,20 L22,5" stroke="#74b4d8" stroke-width="2.8"/><path d="M16,3 L26,1.5 L24.5,11 Z" fill="#74b4d8"/></svg>
<svg class="a" style="left:246px;top:690px;" width="14" height="14" viewBox="0 0 14 14"><rect x="0.5" y="0.5" width="13" height="13" fill="#fff" stroke="#333" stroke-width="1"/><path d="M3.5,7 L6,9.5 L10.5,4.5" stroke="#888" stroke-width="1.2" fill="none"/></svg>
<svg class="a" style="left:173px;top:813px;" width="28" height="28" viewBox="0 0 28 28"><rect x="1.5" y="1.5" width="25" height="25" rx="3" fill="#fff" stroke="#111" stroke-width="2.2"/><path d="M2,8 H26 M2,14 H26 M2,20 H26" stroke="#111" stroke-width="2.4"/></svg>
<svg class="a" style="left:205px;top:813px;" width="28" height="28" viewBox="0 0 28 28"><rect x="1.5" y="1.5" width="25" height="25" rx="3" fill="#fff" stroke="#111" stroke-width="2.2"/><path d="M8,2 V26 M14,2 V26 M20,2 V26" stroke="#111" stroke-width="2.4"/></svg>
<div class="a" style="left:235px;top:812px;width:32px;height:31px;background:#9ab2d0"></div>
<svg class="a" style="left:237px;top:813px;" width="28" height="28" viewBox="0 0 28 28"><rect x="1.5" y="1.5" width="25" height="25" rx="3" fill="none" stroke="#111" stroke-width="2.2"/><path d="M2,2 L26,26 M26,2 L2,26" stroke="#111" stroke-width="1.8"/></svg>
<svg class="a" style="left:174px;top:852px;" width="28" height="30" viewBox="0 0 28 30"><g fill="none" stroke="#333" stroke-width="1.2"><rect x="1" y="1" width="7" height="7" rx="1.5"/><rect x="10" y="1" width="7" height="7" rx="1.5"/><rect x="19" y="1" width="7" height="7" rx="1.5"/><rect x="1" y="10" width="16" height="7" rx="1.5"/><rect x="19" y="10" width="7" height="16" rx="1.5"/><rect x="1" y="19" width="7" height="7" rx="1.5"/><rect x="10" y="19" width="7" height="7" rx="1.5"/></g></svg>
<div class="a" style="left:203px;top:851px;width:32px;height:32px;background:#9ab2d0"></div>
<svg class="a" style="left:206px;top:854px;" width="27" height="27" viewBox="0 0 27 27"><g fill="none" stroke="#333" stroke-width="1.1"><rect x="1" y="1" width="24" height="24"/><path d="M1,9 H25 M1,17 H25 M6,1 L4,9 M11,1 L9,9 M16,1 L12,25 M21,1 L19,9 M6,17 L4,25 M11,17 L9,25 M21,17 L19,25"/></g></svg>
<svg class="a" style="left:237px;top:853px;" width="29" height="28" viewBox="0 0 29 28"><path d="M2,27 V2 H27" stroke="#f0a830" stroke-width="2.6" fill="none"/><path d="M27,6 V27 H5" stroke="#f0a830" stroke-width="2.6" fill="none" stroke-dasharray="2.2,3"/></svg>
<div class="a" style="left:267px;top:851px;width:64px;height:32px;background:#9ab2d0"></div>
<svg class="a" style="left:271px;top:853px;" width="23" height="28" viewBox="0 0 23 28"><rect x="8.5" y="1" width="6" height="17" rx="2" fill="#c04888"/><path d="M8.5,5 L14.5,3 M8.5,9 L14.5,7 M8.5,13 L14.5,11" stroke="#e8c8e0" stroke-width="1.1"/><path d="M8.5,18 L11.5,22 L14.5,18 Z" fill="#c04888"/><path d="M4,15 Q2,15 2,17 V24 Q2,26 4,26 H19 Q21,26 21,24 V17 Q21,15 19,15" stroke="#d870a8" stroke-width="1.6" fill="none"/></svg>
<svg class="a" style="left:304px;top:853px;" width="23" height="28" viewBox="0 0 23 28"><rect x="7" y="1" width="9" height="12" rx="4" fill="#c04888"/><path d="M9.5,3 V11 M11.5,3 V11 M13.5,3 V11" stroke="#e8c8e0" stroke-width="0.8"/><path d="M8,13 L11.5,19 L15,13 Z" fill="#c04888"/><path d="M1.5,20 V24.5 H22 V20" stroke="#d870a8" stroke-width="1.8" fill="none"/></svg>
<div class="a" style="left:4px;top:904px;width:332px;height:18px;background:#e0e0e0;border-bottom:1px solid #b8b8b8"></div>
<span class="t" style="left:8.00px;top:907.44px;font-size:12px;font-weight:700;color:#333;transform:scaleX(1.0281);">Varie</span>
<svg class="a" style="left:321px;top:910px;" width="11" height="7" viewBox="0 0 11 7"><path d="M1,6 L5.5,1.5 L10,6" stroke="#555" stroke-width="1" fill="none"/></svg>
<div class="a" style="left:169px;top:923px;width:1px;height:18px;background-image:linear-gradient(#9a9a9a 50%,transparent 50%);background-size:1px 3px"></div>
<span class="t" style="left:28.60px;top:926.79px;font-size:11px;font-weight:400;color:#1c1c3c;transform:scaleX(0.9594);">Layer</span>
<div class="a" style="left:4px;top:941px;width:332px;height:1px;background:#b8b8b8"></div>
<div class="a" style="left:3px;top:976px;width:333px;height:26px;background:#5a5a5a"></div>
<span class="t" style="left:13.80px;top:983.29px;font-size:11px;font-weight:400;color:#f2f2f2;transform:scaleX(1.0312);">Struttura</span>
<span class="t" style="left:72.30px;top:983.29px;font-size:11px;font-weight:400;color:#a8a8a8;transform:scaleX(0.9723);">Layers</span>
<span class="t" style="left:119.60px;top:983.29px;font-size:11px;font-weight:400;color:#a8a8a8;transform:scaleX(0.9746);">Proprietà</span>
<div class="a" style="left:337px;top:188px;width:5px;height:817px;background:#575757"></div>
<div class="a" style="left:339px;top:158px;width:1151px;height:845px;background:#5a5a5a"></div>
<div class="a" style="left:341px;top:183px;width:1147px;height:820px;border:1px solid #a2a2a2"></div>
<div class="a" style="left:342px;top:160px;width:1148px;height:23px;background:#5a5a5a"></div>
<div class="a" style="left:342px;top:160px;width:848px;height:23px;background:#353535"></div>
<div class="a" style="left:341px;top:183px;width:476px;height:1px;background:#a2a2a2"></div>
<div class="a" style="left:817px;top:183px;width:373px;height:1px;background:#353535"></div>
<span class="t" style="left:348.00px;top:166.69px;font-size:11px;font-weight:700;color:#a9a9a9;transform:scaleX(1.0849);">Ottimizzazione New_1 - Schema_001</span>
<span class="t" style="left:590.20px;top:166.69px;font-size:11px;font-weight:700;color:#a9a9a9;transform:scaleX(1.0803);">Ottimizzazione New1 - Schema_001</span>
<span class="t" style="left:824.70px;top:166.69px;font-size:11px;font-weight:700;color:#ffffff;transform:scaleX(1.0671);">Nesting OrecchiodoppioAttacco_422_Nesting - Schema_001</span>
<svg class="a" style="left:1173px;top:166px;" width="10" height="10" viewBox="0 0 10 10"><path d="M1,1 L9,9 M9,1 L1,9" stroke="#b8b8b8" stroke-width="1.1"/></svg>
<svg class="a" style="left:1449px;top:169px;" width="8" height="5" viewBox="0 0 8 5"><path d="M0.5,0.5 H7.5 L4,4.5 Z" fill="#3a3a3a"/></svg>
<svg class="a" style="left:1463px;top:166px;" width="6" height="10" viewBox="0 0 6 10"><path d="M5,0.5 V9.5 L0.5,5 Z" fill="#c8c8c8"/></svg>
<svg class="a" style="left:1477px;top:166px;" width="6" height="10" viewBox="0 0 6 10"><path d="M1,0.5 V9.5 L5.5,5 Z" fill="#c8c8c8"/></svg>
<div class="a" style="left:342px;top:184px;width:1145px;height:792px;background:#e0e0e0;border:1px solid #2e2e2e"></div>
<div class="a" style="left:361px;top:201px;width:1111px;height:754px;background:#c5bd98;border:1px solid #000;overflow:hidden"><svg class="a" style="left:-362px;top:-202px" width="1920" height="1040"><defs><g id="pt" fill="none" stroke="#00ffff" stroke-width="3">
<path d="M445.5,282.5 H560.5 L567.5,338.5 L557,377 L452,360.5 H443.5 V284.5 Q443.5,282.5 445.5,282.5 Z"/>
<path d="M459.5,287.5 H557 L563.5,339.5 L557.5,358.5 H459.5 V340.5 H447.5 V302.5 H459.5 Z"/>
<path d="M556,292.5 H467 Q463.5,292.5 463.5,296 V302.5 Q463.5,308.5 458,308.5 H448 M448,334.5 H458 Q463.5,334.5 463.5,340 V349 Q463.5,354.5 469,354.5 H557.5"/>
<rect x="472.5" y="296.5" width="80" height="51"/>
<rect x="491" y="288" width="25" height="4" fill="#00ffff" stroke="none"/>
</g><g id="mk" fill="none" stroke="#000" stroke-width="1.2">
<path d="M458,292 h3 l-2,5"/><path d="M510,296 q2,-2 4,0 q-1,2 -3,1"/><path d="M460,335 l2,3 h2"/><path d="M452,358 v3 h3"/>
</g></defs><g shape-rendering="crispEdges"><use href="#pt" x="0" y="0"/><use href="#mk" x="0" y="0"/><use href="#pt" x="129" y="0"/><use href="#mk" x="129" y="0"/><use href="#pt" x="257" y="0"/><use href="#mk" x="257" y="0"/><use href="#pt" x="386" y="0"/><use href="#mk" x="386" y="0"/><use href="#pt" x="514" y="0"/><use href="#mk" x="514" y="0"/><use href="#pt" x="643" y="0"/><use href="#mk" x="643" y="0"/><use href="#pt" x="772" y="0"/><use href="#mk" x="772" y="0"/><use href="#pt" x="900" y="0"/><use href="#mk" x="900" y="0"/><use href="#pt" x="-14" y="96"/><use href="#mk" x="-14" y="96"/><use href="#pt" x="115" y="96"/><use href="#mk" x="115" y="96"/><use href="#pt" x="244" y="96"/><use href="#mk" x="244" y="96"/><use href="#pt" x="372" y="96"/><use href="#mk" x="372" y="96"/><use href="#pt" x="501" y="96"/><use href="#mk" x="501" y="96"/><use href="#pt" x="630" y="96"/><use href="#mk" x="630" y="96"/><use href="#pt" x="758" y="96"/><use href="#mk" x="758" y="96"/><use href="#pt" x="887" y="96"/><use href="#mk" x="887" y="96"/><use href="#pt" x="-27" y="193"/><use href="#mk" x="-27" y="193"/><use href="#pt" x="102" y="193"/><use href="#mk" x="102" y="193"/><use href="#pt" x="230" y="193"/><use href="#mk" x="230" y="193"/><use href="#pt" x="359" y="193"/><use href="#mk" x="359" y="193"/><use href="#pt" x="487" y="193"/><use href="#mk" x="487" y="193"/><use href="#pt" x="616" y="193"/><use href="#mk" x="616" y="193"/><use href="#pt" x="745" y="193"/><use href="#mk" x="745" y="193"/><use href="#pt" x="873" y="193"/><use href="#mk" x="873" y="193"/><use href="#pt" x="-40" y="289"/><use href="#mk" x="-40" y="289"/><use href="#pt" x="88" y="289"/><use href="#mk" x="88" y="289"/><use href="#pt" x="217" y="289"/><use href="#mk" x="217" y="289"/><use href="#pt" x="345" y="289"/><use href="#mk" x="345" y="289"/><use href="#pt" x="474" y="289"/><use href="#mk" x="474" y="289"/><use href="#pt" x="602" y="289"/><use href="#mk" x="602" y="289"/><use href="#pt" x="731" y="289"/><use href="#mk" x="731" y="289"/><use href="#pt" x="860" y="289"/><use href="#mk" x="860" y="289"/><use href="#pt" x="-54" y="386"/><use href="#mk" x="-54" y="386"/><use href="#pt" x="75" y="386"/><use href="#mk" x="75" y="386"/><use href="#pt" x="203" y="386"/><use href="#mk" x="203" y="386"/><use href="#pt" x="332" y="386"/><use href="#mk" x="332" y="386"/><use href="#pt" x="460" y="386"/><use href="#mk" x="460" y="386"/><use href="#pt" x="589" y="386"/><use href="#mk" x="589" y="386"/><use href="#pt" x="718" y="386"/><use href="#mk" x="718" y="386"/><use href="#pt" x="846" y="386"/><use href="#mk" x="846" y="386"/><use href="#pt" x="-68" y="482"/><use href="#mk" x="-68" y="482"/><use href="#pt" x="61" y="482"/><use href="#mk" x="61" y="482"/><use href="#pt" x="190" y="482"/><use href="#mk" x="190" y="482"/><use href="#pt" x="318" y="482"/><use href="#mk" x="318" y="482"/><use href="#pt" x="447" y="482"/><use href="#mk" x="447" y="482"/><use href="#pt" x="576" y="482"/><use href="#mk" x="576" y="482"/><use href="#pt" x="704" y="482"/><use href="#mk" x="704" y="482"/><use href="#pt" x="833" y="482"/><use href="#mk" x="833" y="482"/><use href="#pt" x="-81" y="578"/><use href="#mk" x="-81" y="578"/><use href="#pt" x="48" y="578"/><use href="#mk" x="48" y="578"/><use href="#pt" x="176" y="578"/><use href="#mk" x="176" y="578"/><use href="#pt" x="305" y="578"/><use href="#mk" x="305" y="578"/><use href="#pt" x="433" y="578"/><use href="#mk" x="433" y="578"/><use href="#pt" x="562" y="578"/><use href="#mk" x="562" y="578"/><use href="#pt" x="691" y="578"/><use href="#mk" x="691" y="578"/><use href="#pt" x="819" y="578"/><use href="#mk" x="819" y="578"/></g><path d="M374,947 H1456" stroke="#000" stroke-width="2"/>
<path d="M373.5,932.5 H379.5 L383.5,936.5 V942.5 L380,946 H373.5 L369.5,942 V936.5 Z" fill="none" stroke="#000" stroke-width="1.5"/><path d="M375.5,936 L376.5,934.5 L377.5,936 V940 M374.5,940.5 H378.5 M374,942.5 V946 M379,942.5 V946" fill="none" stroke="#000" stroke-width="1.2"/></svg></div>
<div class="a" style="left:1358px;top:199px;width:42px;height:20px;background:#686868"></div>
<div class="a" style="left:1406px;top:199px;width:68px;height:20px;background:#686868"></div>
<div class="a" style="left:1333px;top:225px;width:20px;height:42px;background:#686868"></div>
<div class="a" style="left:1358px;top:225px;width:42px;height:42px;background:#ffc800"></div>
<div class="a" style="left:1406px;top:225px;width:20px;height:42px;background:#686868"></div>
<div class="a" style="left:1432px;top:225px;width:42px;height:42px;background:#686868"></div>
<div class="a" style="left:1358px;top:273px;width:42px;height:20px;background:#686868"></div>
<div class="a" style="left:1406px;top:273px;width:68px;height:20px;background:#686868"></div>
<span class="t" style="left:1375.00px;top:203.34px;font-size:12px;font-weight:700;color:#fff;">E</span>
<span class="t" style="left:1409.50px;top:202.15px;font-size:14px;font-weight:400;color:#fff;">A</span>
<svg class="a" style="left:1463px;top:209px;" width="8" height="5" viewBox="0 0 8 5"><path d="M0.5,0.5 H7.5 L4,4.5 Z" fill="#3e3e3e"/></svg>
<span class="t" style="left:1338.67px;top:239.84px;font-size:12px;font-weight:700;color:#fff;">D</span>
<span class="t" style="left:1374.67px;top:239.84px;font-size:12px;font-weight:700;color:#fff;">A</span>
<span class="t" style="left:1411.67px;top:239.84px;font-size:12px;font-weight:700;color:#fff;">B</span>
<span class="t" style="left:1449.00px;top:239.84px;font-size:12px;font-weight:700;color:#fff;">S</span>
<span class="t" style="left:1374.67px;top:277.84px;font-size:12px;font-weight:700;color:#fff;">C</span>
<span class="t" style="left:1416.00px;top:277.84px;font-size:12px;font-weight:700;color:#fff;transform:scaleX(0.9789);">Macchin</span>
<div class="a" style="left:1448px;top:425px;width:32px;height:32px;background:rgba(222,110,140,0.62)"></div>
<svg class="a" style="left:1455px;top:428px;" width="19" height="25" viewBox="0 0 19 25"><rect x="1.5" y="1.5" width="16" height="22" rx="3" fill="none" stroke="rgba(20,20,10,0.55)" stroke-width="1.6"/><circle cx="9.5" cy="12.5" r="2.4" fill="rgba(20,20,10,0.55)"/><circle cx="13" cy="8.5" r="1.3" fill="rgba(20,20,10,0.55)"/><circle cx="13" cy="16" r="1.3" fill="rgba(20,20,10,0.55)"/></svg>
<svg class="a" style="left:1454px;top:464px;" width="22" height="28" viewBox="0 0 22 28"><path d="M8,2 H13 V20 L10.5,23 L8,20 Z" fill="rgba(20,20,10,0.55)"/><path d="M8,6.5 L13,4.8 M8,10.5 L13,8.8 M8,14.5 L13,12.8" stroke="#c5bd98" stroke-width="1.1"/><path d="M5.5,13.5 Q1.8,13.5 1.8,17 V22.5 Q1.8,25.8 5,25.8 H16.5 Q19.8,25.8 19.8,22.5 V17 Q19.8,13.5 17,13.5" stroke="rgba(20,20,10,0.55)" stroke-width="1.5" fill="none"/></svg>
<div class="a" style="left:1456px;top:502px;width:16px;height:2px;background:rgba(20,20,10,0.55)"></div>
<svg class="a" style="left:1451px;top:515px;" width="27" height="26" viewBox="0 0 27 26"><rect x="1" y="1" width="14" height="14" fill="none" stroke="rgba(20,20,10,0.55)" stroke-width="1.4"/><circle cx="14" cy="15" r="6" fill="none" stroke="rgba(20,20,10,0.55)" stroke-width="1.8"/><path d="M18.5,19.5 L25,25" stroke="rgba(20,20,10,0.55)" stroke-width="2.6"/></svg>
<svg class="a" style="left:1451px;top:552px;" width="27" height="27" viewBox="0 0 27 27"><circle cx="11" cy="11" r="8.3" fill="none" stroke="rgba(20,20,10,0.55)" stroke-width="1.8"/><path d="M17,17 L25,25" stroke="rgba(20,20,10,0.55)" stroke-width="2.6"/></svg>
<svg class="a" style="left:1451px;top:588px;" width="27" height="27" viewBox="0 0 27 27"><path d="M13,2 V25 M1.5,13.5 H24.5" stroke="rgba(20,20,10,0.55)" stroke-width="1.6"/><path d="M9.5,5.5 L13,2 L16.5,5.5 M9.5,21.5 L13,25 L16.5,21.5 M5,10 L1.5,13.5 L5,17 M21,10 L24.5,13.5 L21,17" stroke="rgba(20,20,10,0.55)" stroke-width="1.6" fill="none"/></svg>
<svg class="a" style="left:1451px;top:626px;" width="27" height="27" viewBox="0 0 27 27"><path d="M13,2.5 A10,10 0 1 1 3.5,10.5" fill="none" stroke="rgba(20,20,10,0.55)" stroke-width="1.8"/><path d="M3,3.5 V10 H9.5" fill="none" stroke="rgba(20,20,10,0.55)" stroke-width="1.7"/></svg>
<svg class="a" style="left:1451px;top:663px;" width="27" height="25" viewBox="0 0 27 25"><path d="M2,2 L8,8 M2,2 V6.5 M2,2 H6.5 M24,2 L18,8 M24,2 V6.5 M24,2 H19.5 M2,23 L8,17 M2,23 V18.5 M2,23 H6.5 M24,23 L18,17 M24,23 V18.5 M24,23 H19.5" stroke="rgba(20,20,10,0.55)" stroke-width="1.6" fill="none"/></svg>
<svg class="a" style="left:1451px;top:699px;" width="27" height="27" viewBox="0 0 27 27"><path d="M2,13 L13,2 L24,13 M4.5,11 V25 H21.5 V11 M9.5,25 V16.5 H16.5 V25" stroke="rgba(20,20,10,0.55)" stroke-width="1.6" fill="none" stroke-linejoin="miter"/></svg>
<div class="a" style="left:473px;top:975px;width:122px;height:27px;background:#5c5c5c;border:1px solid #3e3e3e;border-top:none"></div>
<svg class="a" style="left:351px;top:980px;" width="14" height="14" viewBox="0 0 14 14"><path d="M1.5,2 Q1.5,1 2.5,1 H11.5 Q12.5,1 12.5,2 V12 Q12.5,13 11.5,13 H2.5 Q1.5,13 1.5,12 Z M1.5,5 H12.5 M1.5,9 H12.5" fill="none" stroke="#9aa8a8" stroke-width="1.3"/></svg>
<span class="t" style="left:368.20px;top:981.69px;font-size:11px;font-weight:400;color:#f0f0f0;transform:scaleX(0.9696);">Elementi da produrre</span>
<svg class="a" style="left:482px;top:982px;" width="13" height="13" viewBox="0 0 13 13"><g fill="none" stroke="#9aa8a8" stroke-width="1.2"><rect x="1" y="1" width="4" height="3"/><rect x="7" y="1" width="4" height="3"/><rect x="1" y="6" width="4" height="6"/><rect x="7" y="6" width="4" height="2.5"/><rect x="7" y="10" width="4" height="2"/></g></svg>
<span class="t" style="left:499.20px;top:982.69px;font-size:11px;font-weight:400;color:#f0f0f0;transform:scaleX(0.9582);">Visualizza risultato</span>
<svg class="a" style="left:600px;top:980px;" width="14" height="14" viewBox="0 0 14 14"><rect x="1" y="1" width="12" height="12" fill="none" stroke="#9aa8a8" stroke-width="1.1"/><path d="M3,11 L11,3" stroke="#9aa8a8" stroke-width="1.5"/><circle cx="1.5" cy="1.5" r="1.3" fill="#9aa8a8"/><circle cx="12.5" cy="12.5" r="1.3" fill="#9aa8a8"/></svg>
<span class="t" style="left:617.40px;top:981.69px;font-size:11px;font-weight:400;color:#f0f0f0;transform:scaleX(0.9677);">Editor visuale</span>
<span class="t" style="left:1228.30px;top:982.40px;font-size:15px;font-weight:400;color:#f0f0f0;transform:scaleX(1.0644);white-space:pre;">L: 3050mm  W: 2070mm  T: 15mm</span>
<div class="a" style="left:1488px;top:184px;width:2px;height:821px;background:#575757"></div>
<div class="a" style="left:1490px;top:157px;width:430px;height:31px;background:#333"></div>
<span class="t" style="left:1499.00px;top:166.56px;font-size:18px;font-weight:700;color:#ffffff;transform:scaleX(1.1013);">Catalogo</span>
<svg class="a" style="left:1900px;top:170px;" width="11" height="11" viewBox="0 0 11 11"><path d="M2.5,1 H8.5 M3.5,1 V5.5 M7.5,1 V5.5 M1.5,5.5 H9.5 M5.5,5.5 V10" stroke="#d8d8d8" stroke-width="1.1" fill="none"/></svg>
<div class="a" style="left:1490px;top:188px;width:430px;height:817px;background:#575757"></div>
<div class="a" style="left:1492px;top:188px;width:426px;height:815px;background:#5a5a5a;border:1px solid #a2a2a2"></div>
<div class="a" style="left:1493px;top:231px;width:424px;height:1px;background:#6e6e6e"></div>
<div class="a" style="left:1493px;top:272px;width:424px;height:1px;background:#6e6e6e"></div>
<div class="a" style="left:1493px;top:315px;width:424px;height:1px;background:#444"></div>
<div class="a" style="left:1501px;top:209px;width:6px;height:6px;background:#fff"></div>
<div class="a" style="left:1501px;top:250px;width:6px;height:6px;background:#fff"></div>
<div class="a" style="left:1501px;top:291px;width:6px;height:6px;background:#fff"></div>
<span class="t" style="left:1516.90px;top:201.72px;font-size:19px;font-weight:400;color:#ffffff;transform:scaleX(0.9375);">Lavorazioni</span>
<span class="t" style="left:1516.90px;top:243.42px;font-size:19px;font-weight:400;color:#ffffff;transform:scaleX(0.8938);">Cerca</span>
<span class="t" style="left:1515.00px;top:284.32px;font-size:19px;font-weight:400;color:#ffffff;transform:scaleX(0.9180);">Accessori</span>
<div class="a" style="left:1686px;top:209px;width:8px;height:2px;background:#d8d8d8"></div>
<div class="a" style="left:1700px;top:209px;width:10px;height:1px;background:#4a78b0"></div>
<div class="a" style="left:1714px;top:209px;width:12px;height:1px;background:#a0a0a0"></div>
<div class="a" style="left:1709px;top:203px;width:5px;height:13px;background:#707070"></div>
<div class="a" style="left:1732px;top:209px;width:8px;height:2px;background:#d8d8d8"></div>
<div class="a" style="left:1735px;top:206px;width:2px;height:8px;background:#d8d8d8"></div>
<div class="a" style="left:1748px;top:190px;width:42px;height:40px;background:#333"></div>
<svg class="a" style="left:1758px;top:196px;" width="22" height="28" viewBox="0 0 22 28"><path d="M9,1 H13 V16 L11,20 L9,16 Z" fill="#e8b8b0"/><path d="M9,5 L13,3.5 M9,9 L13,7.5 M9,13 L13,11.5" stroke="#333" stroke-width="1.1"/><path d="M5,11 Q2,11 2,14 V24 Q2,26.5 4.5,26.5 H17.5 Q20,26.5 20,24 V14 Q20,11 17,11" stroke="#e8b8b0" stroke-width="1.8" fill="none"/></svg>
<svg class="a" style="left:1800px;top:197px;" width="23" height="25" viewBox="0 0 23 25"><rect x="1" y="1" width="21" height="23" rx="2" fill="none" stroke="#3aa0d8" stroke-width="1.5"/><path d="M1,7 H22 M8,4 H15" stroke="#3aa0d8" stroke-width="1.3"/><circle cx="4.5" cy="4" r="1" fill="#3aa0d8"/><circle cx="18.5" cy="4" r="1" fill="#3aa0d8"/><rect x="4.5" y="10.5" width="14" height="10" fill="none" stroke="#3aa0d8" stroke-width="1.3"/></svg>
<svg class="a" style="left:1842px;top:197px;" width="25" height="25" viewBox="0 0 25 25"><path d="M1.5,24 V1.5 H23" stroke="#ee7028" stroke-width="2" fill="none"/><path d="M23,6 V23.5 H6" stroke="#ee7028" stroke-width="2.2" fill="none" stroke-dasharray="2,3.2"/></svg>
<svg class="a" style="left:1881px;top:196px;" width="28" height="28" viewBox="0 0 28 28"><g fill="none" stroke="#f0dc20" stroke-width="1.2" stroke-linejoin="round"><path d="M14,1.5 L26,7 L14,12.5 L2,7 Z"/><path d="M5,9.5 L2,11 L14,17 L26,11 L23,9.5"/><path d="M5,14 L2,15.5 L14,21.5 L26,15.5 L23,14"/><path d="M8,13 L20,8"/></g></svg>
<div class="a" style="left:1874px;top:232px;width:42px;height:40px;border:1px solid #8a8a8a"></div>
<svg class="a" style="left:1879px;top:237px;" width="32" height="30" viewBox="0 0 32 30"><circle cx="12.5" cy="12" r="9.5" fill="none" stroke="#d4f0f2" stroke-width="2"/><path d="M19.5,19 L28,27.5" stroke="#d4f0f2" stroke-width="2.2"/></svg>
<svg class="a" style="left:1845px;top:292px;" width="8" height="5" viewBox="0 0 8 5"><path d="M0.5,0.5 H7.5 L4,4.5 Z" fill="#3a3a3a"/></svg>
<svg class="a" style="left:1878px;top:277px;" width="33" height="34" viewBox="0 0 33 34"><path d="M2.5,15 L16.5,2 L30.5,15 V29 Q30.5,31.5 28,31.5 H5 Q2.5,31.5 2.5,29 Z" fill="none" stroke="#d4f0f2" stroke-width="2.6" stroke-linejoin="round"/></svg>
<div class="a" style="left:1493px;top:316px;width:424px;height:686px;background:#5a5a5a;overflow:hidden">
<div class="a" style="left:8px;top:7px;width:196px;height:139px;border:2px solid #4a6ca4"></div>
<div class="a" style="left:11px;top:10px;width:190px;height:133px;background:#fff;border:1px solid #000"></div>
<svg class="a" style="left:62px;top:36px;" width="88" height="62" viewBox="0 0 88 62"><rect x="1.5" y="1.5" width="86" height="59.5" rx="7.5" fill="none" stroke="#111" stroke-width="3"/><circle cx="15" cy="16" r="4.6" fill="#3aa530"/><circle cx="29" cy="16" r="4.6" fill="#3aa530"/><circle cx="59.5" cy="16" r="4.6" fill="#3aa530"/><circle cx="73.5" cy="16" r="4.6" fill="#3aa530"/></svg>
<span class="t" style="left:55.65px;top:122.49px;font-size:11px;font-weight:400;color:#4e4e6a;transform:scaleX(1.0104);">Foratura per basette</span>
<div class="a" style="left:206px;top:10px;width:190px;height:133px;background:#fff;border:1px solid #000"></div>
<svg class="a" style="left:257px;top:36px;" width="88" height="62" viewBox="0 0 88 62"><rect x="1.5" y="1.5" width="86" height="59.5" rx="7.5" fill="none" stroke="#111" stroke-width="3"/><circle cx="15" cy="14.5" r="2" fill="#3aa530"/><circle cx="29.5" cy="14.5" r="2" fill="#3aa530"/><circle cx="22" cy="22" r="4.6" fill="#3aa530"/><circle cx="58" cy="14.5" r="2" fill="#3aa530"/><circle cx="73" cy="14.5" r="2" fill="#3aa530"/><circle cx="65.5" cy="22" r="4.6" fill="#3aa530"/></svg>
<span class="t" style="left:280.45px;top:122.49px;font-size:11px;font-weight:400;color:#4e4e6a;transform:scaleX(0.9743);">Cerniere</span>
<div class="a" style="left:11px;top:148px;width:190px;height:133px;background:#fff;border:1px solid #000"></div>
<svg class="a" style="left:62px;top:174px;" width="88" height="62" viewBox="0 0 88 62"><rect x="1.5" y="1.5" width="86" height="59.5" rx="7.5" fill="none" stroke="#111" stroke-width="3"/><circle cx="15" cy="46" r="4.6" fill="#3aa530"/><circle cx="29.5" cy="46" r="4.6" fill="#3aa530"/><circle cx="44" cy="46" r="4.6" fill="#3aa530"/><circle cx="58.5" cy="46" r="4.6" fill="#3aa530"/><circle cx="73" cy="46" r="4.6" fill="#3aa530"/></svg>
<span class="t" style="left:90.90px;top:260.49px;font-size:11px;font-weight:400;color:#4e4e6a;transform:scaleX(1.0082);">Fitting</span>
<div class="a" style="left:206px;top:148px;width:190px;height:133px;background:#fff;border:1px solid #000"></div>
<svg class="a" style="left:257px;top:174px;" width="88" height="62" viewBox="0 0 88 62"><rect x="1.5" y="1.5" width="86" height="59.5" rx="7.5" fill="none" stroke="#111" stroke-width="3"/><circle cx="15" cy="16" r="4.6" fill="#3aa530"/><circle cx="15" cy="45.5" r="4.6" fill="#3aa530"/><circle cx="29.5" cy="16" r="4.6" fill="#3aa530"/><circle cx="29.5" cy="45.5" r="4.6" fill="#3aa530"/><circle cx="44" cy="16" r="4.6" fill="#3aa530"/><circle cx="44" cy="45.5" r="4.6" fill="#3aa530"/><circle cx="58.5" cy="16" r="4.6" fill="#3aa530"/><circle cx="58.5" cy="45.5" r="4.6" fill="#3aa530"/><circle cx="73" cy="16" r="4.6" fill="#3aa530"/><circle cx="73" cy="45.5" r="4.6" fill="#3aa530"/></svg>
<span class="t" style="left:275.50px;top:260.49px;font-size:11px;font-weight:400;color:#4e4e6a;transform:scaleX(0.9815);">Fitting O/V</span>
<div class="a" style="left:11px;top:286px;width:190px;height:133px;background:#fff;border:1px solid #000"></div>
<svg class="a" style="left:62px;top:312px;" width="88" height="62" viewBox="0 0 88 62"><rect x="1.5" y="13" width="86" height="36" rx="6.5" fill="none" stroke="#111" stroke-width="3"/><circle cx="20" cy="31" r="4.5" fill="#3aa530"/><circle cx="44" cy="31" r="4.5" fill="#3aa530"/><circle cx="68" cy="31" r="4.5" fill="#3aa530"/></svg>
<span class="t" style="left:65.60px;top:398.49px;font-size:11px;font-weight:400;color:#4e4e6a;transform:scaleX(0.9790);">Foratura multipla</span>
<div class="a" style="left:206px;top:286px;width:190px;height:133px;background:#fff;border:1px solid #000"></div>
<svg class="a" style="left:257px;top:312px;" width="88" height="62" viewBox="0 0 88 62"><rect x="1.5" y="1.5" width="86" height="59.5" rx="7.5" fill="none" stroke="#111" stroke-width="3"/><circle cx="21" cy="40" r="8.7" fill="#3aa530"/></svg>
<span class="t" style="left:290.00px;top:398.49px;font-size:11px;font-weight:400;color:#4e4e6a;transform:scaleX(0.9727);">Foro</span>
<div class="a" style="left:11px;top:424px;width:190px;height:133px;background:#fff;border:1px solid #000"></div>
<svg class="a" style="left:62px;top:450px;" width="88" height="62" viewBox="0 0 88 62"><rect x="1.5" y="1.5" width="86" height="59.5" rx="7.5" fill="none" stroke="#111" stroke-width="3"/><path d="M15.5,17.5 H74.5" stroke="#f0aa30" stroke-width="9.5" stroke-linecap="round"/><path d="M15.5,31.5 H74.5" stroke="#f0aa30" stroke-width="9.5" stroke-linecap="round"/><path d="M15.5,45.5 H74.5" stroke="#f0aa30" stroke-width="9.5" stroke-linecap="round"/></svg>
<span class="t" style="left:69.65px;top:536.49px;font-size:11px;font-weight:400;color:#4e4e6a;transform:scaleX(0.9668);">FresataMultipla</span>
<div class="a" style="left:206px;top:424px;width:190px;height:133px;background:#fff;border:1px solid #000"></div>
<svg class="a" style="left:257px;top:450px;" width="88" height="62" viewBox="0 0 88 62"><rect x="1.5" y="1.5" width="86" height="59.5" rx="7.5" fill="none" stroke="#111" stroke-width="3"/><path d="M14.7,43.4 H73" stroke="#f0aa30" stroke-width="9.5" stroke-linecap="round"/></svg>
<span class="t" style="left:264.90px;top:536.49px;font-size:11px;font-weight:400;color:#4e4e6a;transform:scaleX(0.9841);">Fresata lineare</span>
<div class="a" style="left:11px;top:562px;width:190px;height:133px;background:#fff;border:1px solid #000"></div>
<svg class="a" style="left:62px;top:588px;" width="88" height="62" viewBox="0 0 88 62"><rect x="1.5" y="1.5" width="86" height="59.5" rx="7.5" fill="none" stroke="#111" stroke-width="3"/><path d="M18.5,27.5 Q44,58 71.5,27.5" stroke="#f0aa30" stroke-width="8" stroke-linecap="round" fill="none"/></svg>
<span class="t" style="left:74.95px;top:674.49px;font-size:11px;font-weight:400;color:#4e4e6a;transform:scaleX(0.9863);">Fresata Arco</span>
<div class="a" style="left:206px;top:562px;width:190px;height:133px;background:#fff;border:1px solid #000"></div>
<svg class="a" style="left:257px;top:588px;" width="88" height="62" viewBox="0 0 88 62"><rect x="1.5" y="1.5" width="86" height="59.5" rx="7.5" fill="none" stroke="#111" stroke-width="3"/><path d="M17,39.5 Q44,7 76,39.5 Z" stroke="#f0aa30" stroke-width="7.5" stroke-linejoin="round" fill="none"/><path d="M32,16.5 L38,29.5 M58,16.5 L52,29.5" stroke="#111" stroke-width="1.6"/></svg>
<span class="t" style="left:251.05px;top:674.49px;font-size:11px;font-weight:400;color:#4e4e6a;transform:scaleX(0.9843);">Fresata Arco Inglese</span>
<div class="a" style="left:406px;top:0px;width:18px;height:686px;background:#fff;border:1px solid #c8c8c8"></div>
<div class="a" style="left:408px;top:1px;width:14px;height:15px;background:#a8a8a8"></div>
<svg class="a" style="left:410px;top:5px;" width="10" height="6" viewBox="0 0 10 6"><path d="M0.5,5.5 L5,0.5 L9.5,5.5 Z" fill="#eee"/></svg>
<div class="a" style="left:407px;top:16px;width:16px;height:165px;background:#5a5a5a"></div>
<div class="a" style="left:408px;top:668px;width:14px;height:15px;background:#a8a8a8;border:1px solid #8a8a8a"></div>
<svg class="a" style="left:410px;top:673px;" width="10" height="6" viewBox="0 0 10 6"><path d="M0.5,0.5 L5,5.5 L9.5,0.5 Z" fill="#eee"/></svg>
</div>
<div class="a" style="left:1493px;top:315px;width:1px;height:687px;background:#333"></div>
<div class="a" style="left:0;top:1003px;width:1920px;height:2px;background:#575757"></div>
<div class="a" style="left:0;top:1005px;width:1920px;height:1px;background:#b0b0b0"></div>
<div class="a" style="left:0;top:1006px;width:1920px;height:26px;background:#333"></div>
<span class="t" style="left:21.60px;top:1013.69px;font-size:11px;font-weight:400;color:#f0f0f0;transform:scaleX(1.0488);">V.: 25.04.001.3</span>
<span class="t" style="left:129.50px;top:1013.69px;font-size:11px;font-weight:400;color:#f0f0f0;transform:scaleX(0.9605);">Pwd: 0</span>
<span class="t" style="left:186.70px;top:1013.69px;font-size:11px;font-weight:400;color:#f0f0f0;transform:scaleX(0.9598);">Key: 231110007 - FFFFE0000000000000000000000000000DFFBFEFFBFFFFAFFFFFFFE</span>
<span class="t" style="left:674.30px;top:1013.69px;font-size:11px;font-weight:400;color:#f0f0f0;transform:scaleX(0.8786);">ROVER A</span></div><div class="a" style="left:1578px;top:1037px;width:100px;height:3px;background:#f8f4e2;border-radius:3px 3px 0 0"></div></body></html>
